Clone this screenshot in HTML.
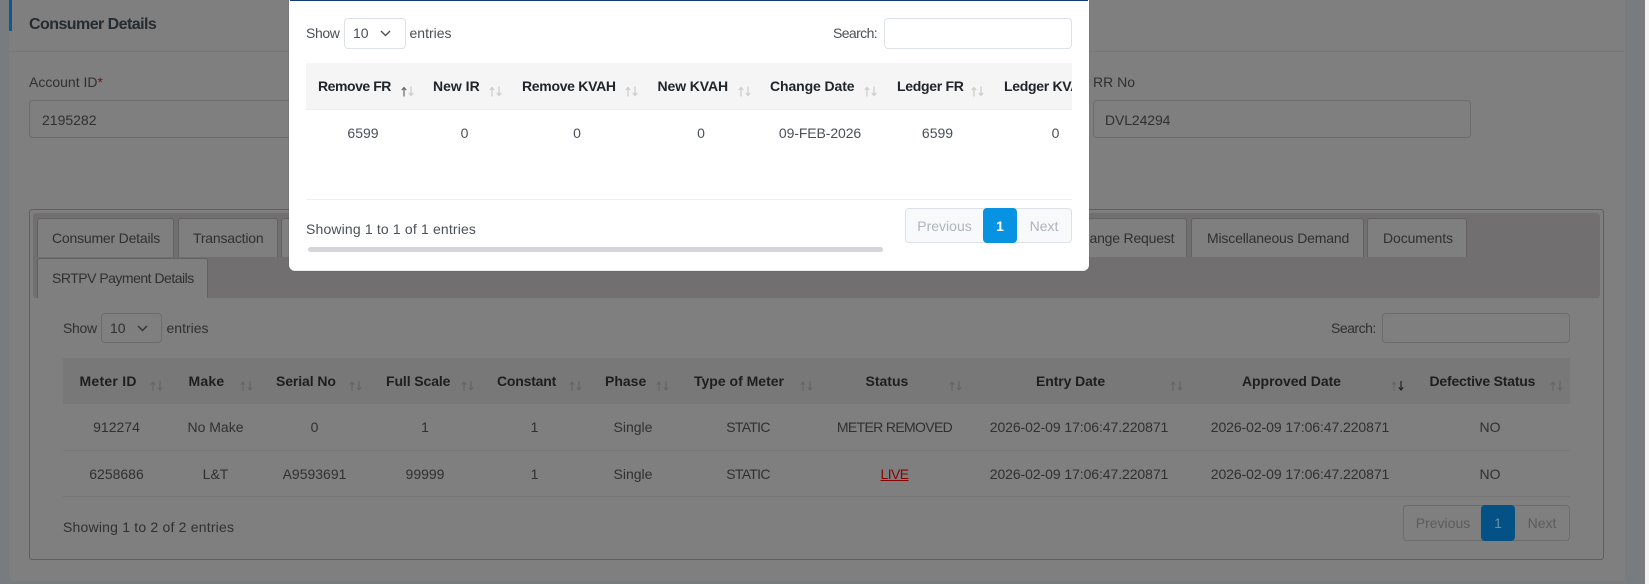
<!DOCTYPE html>
<html><head><meta charset="utf-8"><style>
html,body{margin:0;padding:0}
body{width:1649px;height:584px;position:relative;overflow:hidden;background:#797c7e;font:14px/20px "Liberation Sans",sans-serif;color:#303030}
div,svg,span{position:absolute;box-sizing:border-box}
.t,.c,.b{white-space:nowrap;transform:translateY(-50%)}
.c{transform:translate(-50%,-50%)}
.b{font-weight:bold;color:#1e1e1e}
.i{border:1px solid #6c6c6c;border-radius:4px}
.tab{background:#7f7f7f;border:1px solid #626262;border-bottom:0;border-radius:3px 3px 0 0}
.m{color:#495057}.m.b{color:#212529}
.mi{border:1px solid #dee2e6;border-radius:4px;background:#fff}
</style></head><body>
<svg width="0" height="0"><defs>
<g id="ua"><path d="M3 10V1.5M.8 3.6 3 1l2.2 2.6" fill="none" stroke="currentColor" stroke-width="1.2"/></g>
<g id="da"><path d="M3 0v8.5M.8 6.4 3 9l2.2-2.6" fill="none" stroke="currentColor" stroke-width="1.2"/></g>
</defs></svg>

<div style="left:1645px;top:0;width:4px;height:584px;background:#f4f4f4"></div>
<div style="left:9px;top:-5px;width:1615.5px;height:586px;background:#7f7f7f;border-radius:4px"></div>
<div style="left:9px;top:0;width:3px;height:31px;background:#0d5a8c"></div>
<div style="left:9px;top:51px;width:1615px;height:1px;background:#777"></div>
<div class="t" style="left:29px;top:25px;font-size:16px;font-weight:bold;color:#262b30;letter-spacing:-.55px">Consumer Details</div>

<div class="t" style="left:29px;top:82px">Account ID<span style="position:static;color:#7d1010">*</span></div>
<div class="i" style="left:29px;top:100px;width:400px;height:38px"></div>
<div class="t" style="left:42px;top:120px">2195282</div>
<div class="t" style="left:1093px;top:82px">RR No</div>
<div class="i" style="left:1093px;top:100px;width:378px;height:38px"></div>
<div class="t" style="left:1105px;top:120px;letter-spacing:-.1px">DVL24294</div>

<div style="left:29px;top:209px;width:1575px;height:351px;border:1px solid #5f5f5f;border-radius:3px"></div>
<div style="left:33px;top:213px;width:1567px;height:85px;background:#716f70;border-radius:3px"></div>

<div class="tab" style="left:37px;top:218px;width:137px;height:39px"></div>
<div class="t" style="left:52px;top:238px;letter-spacing:-.2px">Consumer Details</div>
<div class="tab" style="left:178px;top:218px;width:100px;height:39px"></div>
<div class="t" style="left:193px;top:238px;letter-spacing:-.2px">Transaction</div>
<div class="tab" style="left:281px;top:218px;width:120px;height:39px"></div>
<div class="tab" style="left:1080px;top:218px;width:107px;height:39px"></div>
<div class="t" style="left:1072px;top:238px;letter-spacing:-.2px">Change Request</div>
<div class="tab" style="left:1191px;top:218px;width:173px;height:39px"></div>
<div class="t" style="left:1207px;top:238px;letter-spacing:-.17px">Miscellaneous Demand</div>
<div class="tab" style="left:1367px;top:218px;width:100px;height:39px"></div>
<div class="t" style="left:1383px;top:238px;letter-spacing:-.1px">Documents</div>
<div class="tab" style="left:37px;top:258px;width:171px;height:40px"></div>
<div class="t" style="left:52px;top:278px;letter-spacing:-.5px">SRTPV Payment Details</div>

<!-- lower table -->
<div class="t" style="left:63px;top:328px;letter-spacing:-.3px">Show</div>
<div class="i" style="left:101px;top:313px;width:61px;height:30px"></div>
<div class="t" style="left:110px;top:328px">10</div>
<svg style="left:137px;top:325px" width="11" height="7"><path d="M1 1l4.5 4.5L10 1" fill="none" stroke="#333" stroke-width="1.4"/></svg>
<div class="t" style="left:166.500px;top:328px">entries</div>
<div class="t" style="left:1331px;top:328px;letter-spacing:-.5px">Search:</div>
<div class="i" style="left:1382px;top:313px;width:188px;height:30px"></div>

<div style="left:63px;top:358px;width:1507px;height:46px;background:#787878"></div>
<div style="left:63px;top:450px;width:1507px;height:1px;background:#767676"></div>
<div style="left:63px;top:496px;width:1507px;height:1px;background:#767676"></div>

<div class="t b" style="left:79.500px;top:381px;letter-spacing:.25px">Meter ID</div>
<div class="t b" style="left:188.500px;top:381px;letter-spacing:.2px">Make</div>
<div class="t b" style="left:276px;top:381px;letter-spacing:-.1px">Serial No</div>
<div class="t b" style="left:386px;top:381px;letter-spacing:-.1px">Full Scale</div>
<div class="t b" style="left:497px;top:381px;letter-spacing:-.2px">Constant</div>
<div class="t b" style="left:605px;top:381px">Phase</div>
<div class="t b" style="left:694px;top:381px">Type of Meter</div>
<div class="t b" style="left:865.500px;top:381px">Status</div>
<div class="t b" style="left:1036px;top:381px;letter-spacing:-.1px">Entry Date</div>
<div class="t b" style="left:1242px;top:381px;letter-spacing:-.05px">Approved Date</div>
<div class="t b" style="left:1429.500px;top:381px;letter-spacing:-.2px">Defective Status</div>

<svg style="left:0;top:0" width="1649" height="584">
<use href="#ua" x="150" y="381" color="#666"/><use href="#da" x="157" y="381" color="#666"/>
<use href="#ua" x="240" y="381" color="#666"/><use href="#da" x="247" y="381" color="#666"/>
<use href="#ua" x="349" y="381" color="#666"/><use href="#da" x="356" y="381" color="#666"/>
<use href="#ua" x="461" y="381" color="#666"/><use href="#da" x="468" y="381" color="#666"/>
<use href="#ua" x="569" y="381" color="#666"/><use href="#da" x="576" y="381" color="#666"/>
<use href="#ua" x="656" y="381" color="#666"/><use href="#da" x="663" y="381" color="#666"/>
<use href="#ua" x="800" y="381" color="#666"/><use href="#da" x="807" y="381" color="#666"/>
<use href="#ua" x="949" y="381" color="#666"/><use href="#da" x="956" y="381" color="#666"/>
<use href="#ua" x="1170" y="381" color="#666"/><use href="#da" x="1177" y="381" color="#666"/>
<use href="#ua" x="1391" y="381" color="#666"/><use href="#da" x="1398" y="381" color="#222"/>
<use href="#ua" x="1550" y="381" color="#666"/><use href="#da" x="1557" y="381" color="#666"/>
</svg>

<div class="c" style="left:116.500px;top:427px">912274</div>
<div class="c" style="left:215.500px;top:427px">No Make</div>
<div class="c" style="left:314.500px;top:427px">0</div>
<div class="c" style="left:425px;top:427px">1</div>
<div class="c" style="left:534.500px;top:427px">1</div>
<div class="c" style="left:633px;top:427px">Single</div>
<div class="c" style="left:748px;top:427px;letter-spacing:-.7px">STATIC</div>
<div class="c" style="left:894.500px;top:427px;letter-spacing:-.65px">METER REMOVED</div>
<div class="c" style="left:1079px;top:427px;letter-spacing:-.08px">2026-02-09 17:06:47.220871</div>
<div class="c" style="left:1300px;top:427px;letter-spacing:-.08px">2026-02-09 17:06:47.220871</div>
<div class="c" style="left:1490px;top:427px">NO</div>

<div class="c" style="left:116.500px;top:474px">6258686</div>
<div class="c" style="left:215.500px;top:474px">L&amp;T</div>
<div class="c" style="left:314.500px;top:474px">A9593691</div>
<div class="c" style="left:425px;top:474px">99999</div>
<div class="c" style="left:534.500px;top:474px">1</div>
<div class="c" style="left:633px;top:474px">Single</div>
<div class="c" style="left:748px;top:474px;letter-spacing:-.7px">STATIC</div>
<div class="c" style="left:894.500px;top:474px;color:#850505;text-decoration:underline;letter-spacing:-.6px">LIVE</div>
<div class="c" style="left:1079px;top:474px;letter-spacing:-.08px">2026-02-09 17:06:47.220871</div>
<div class="c" style="left:1300px;top:474px;letter-spacing:-.08px">2026-02-09 17:06:47.220871</div>
<div class="c" style="left:1490px;top:474px">NO</div>

<div class="t" style="left:63px;top:527px;letter-spacing:.2px">Showing 1 to 2 of 2 entries</div>
<div class="i" style="left:1403px;top:505px;width:167px;height:36px"></div>
<div class="c" style="left:1443px;top:523px;color:#5c5c5c">Previous</div>
<div style="left:1481px;top:505px;width:34px;height:36px;background:#045285;border-radius:4px"></div>
<div class="c" style="left:1498px;top:523px;color:#6f8ea5">1</div>
<div class="c" style="left:1542px;top:523px;color:#5c5c5c">Next</div>

<!-- modal -->
<div style="left:289px;top:-6px;width:800px;height:277px;background:#fff;border-bottom:1px solid #eee;border-radius:6px;overflow:hidden;box-shadow:0 0 1px rgba(0,0,0,.3)"></div>
<div style="left:290px;top:0;width:798px;height:1px;background:#123a78"></div>

<div class="t m" style="left:306px;top:33px;letter-spacing:-.4px">Show</div>
<div class="mi" style="left:344px;top:18px;width:62px;height:31px"></div>
<div class="t m" style="left:353px;top:33px">10</div>
<svg style="left:380px;top:30px" width="11" height="7"><path d="M1 1l4.500 4.500L10 1" fill="none" stroke="#495057" stroke-width="1.400"/></svg>
<div class="t m" style="left:409.500px;top:33px">entries</div>
<div class="t m" style="left:833px;top:33px;letter-spacing:-.6px">Search:</div>
<div class="mi" style="left:884px;top:18px;width:188px;height:31px"></div>

<div style="left:306px;top:63px;width:766px;height:47px;background:#f5f5f5;border-bottom:1px solid #eee;overflow:hidden">
<div class="t m b" style="left:12px;top:23px;letter-spacing:-.45px">Remove FR</div>
<div class="t m b" style="left:127px;top:23px">New IR</div>
<div class="t m b" style="left:216px;top:23px;letter-spacing:-.3px">Remove KVAH</div>
<div class="t m b" style="left:351.500px;top:23px;letter-spacing:-.1px">New KVAH</div>
<div class="t m b" style="left:464px;top:23px;letter-spacing:-.1px">Change Date</div>
<div class="t m b" style="left:591px;top:23px;letter-spacing:-.3px">Ledger FR</div>
<div class="t m b" style="left:698px;top:23px;letter-spacing:-.3px">Ledger KVAH</div>
</div>

<svg style="left:0;top:0" width="1080" height="120">
<use href="#ua" x="401" y="86.500" color="#666"/><use href="#da" x="408" y="86.500" color="#ccc"/>
<use href="#ua" x="489" y="86.500" color="#ccc"/><use href="#da" x="496" y="86.500" color="#ccc"/>
<use href="#ua" x="625" y="86.500" color="#ccc"/><use href="#da" x="632" y="86.500" color="#ccc"/>
<use href="#ua" x="738" y="86.500" color="#ccc"/><use href="#da" x="745" y="86.500" color="#ccc"/>
<use href="#ua" x="864" y="86.500" color="#ccc"/><use href="#da" x="871" y="86.500" color="#ccc"/>
<use href="#ua" x="971" y="86.500" color="#ccc"/><use href="#da" x="978" y="86.500" color="#ccc"/>
</svg>

<div class="c m" style="left:363px;top:133px">6599</div>
<div class="c m" style="left:464.500px;top:133px">0</div>
<div class="c m" style="left:577px;top:133px">0</div>
<div class="c m" style="left:701px;top:133px">0</div>
<div class="c m" style="left:820px;top:133px;letter-spacing:-.1px">09-FEB-2026</div>
<div class="c m" style="left:937.500px;top:133px">6599</div>
<div class="c m" style="left:1055.500px;top:133px">0</div>

<div style="left:306px;top:199px;width:766px;height:1px;background:#eceef0"></div>
<div class="t m" style="left:306px;top:229px;letter-spacing:.16px">Showing 1 to 1 of 1 entries</div>
<div style="left:308px;top:247px;width:575px;height:5px;background:#d4d5d8;border-radius:3px"></div>

<div style="left:905px;top:208px;width:167px;height:35px;background:#f8f9fa;border:1px solid #dee2e6;border-radius:4px"></div>
<div class="c" style="left:944.500px;top:226px;color:#adb5bd">Previous</div>
<div style="left:983px;top:208px;width:34px;height:35px;background:#0892e2;border-radius:4px"></div>
<div class="c" style="left:1000px;top:226px;color:#fff;font-weight:bold">1</div>
<div class="c" style="left:1044px;top:226px;color:#adb5bd">Next</div>
</body></html>
